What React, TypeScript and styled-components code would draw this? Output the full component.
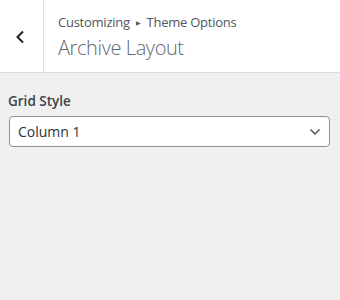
import React from "react";
import styled, { createGlobalStyle } from "styled-components";

const Global = createGlobalStyle`
  html, body { margin: 0; padding: 0; background: #f0f0f1; }
  body { font-family: "Open Sans", "Noto Sans", sans-serif; }
`;

const Page = styled.div`
  width: 340px;
  height: 300px;
  background: #f0f0f1;
`;

const Header = styled.div`
  display: flex;
  height: 72px;
  background: #fff;
  border-bottom: 1px solid #dcdcde;
`;

const Back = styled.button`
  width: 44px;
  flex: none;
  border: 0;
  border-right: 1px solid #dcdcde;
  background: #fff;
  display: flex;
  align-items: center;
  justify-content: center;
  padding: 2px 4px 0 0;
  color: #1d2327;
`;

const Titles = styled.div`
  display: flex;
  flex-direction: column;
  padding: 12px 0 0 14px;
`;

const Action = styled.span`
  font-size: 13px;
  line-height: 20px;
  color: #50575e;
  letter-spacing: -0.25px;
`;

const Arrow = styled.span`
  font-size: 6px;
  margin: 0 6px;
  vertical-align: 2px;
`;

const Title = styled.h3`
  margin: 2px 0 0;
  font-size: 20px;
  line-height: 26px;
  font-weight: 300;
  color: #646970;
  letter-spacing: -0.4px;
`;

const Body = styled.div`
  padding: 19px 10px 0 9px;
`;

const Label = styled.div`
  font-size: 13.5px;
  font-weight: 600;
  color: #3c434a;
  line-height: 18px;
  margin: 0 0 6px -1px;
`;

const Select = styled.div`
  box-sizing: border-box;
  height: 31px;
  border: 1px solid #8c8f94;
  border-radius: 4px;
  background: #fff;
  display: flex;
  align-items: center;
  justify-content: space-between;
  padding: 0 8px 0 8px;
  font-size: 14px;
  color: #2c3338;
`;

export default function App() {
  return (
    <Page>
      <Global />
      <Header>
        <Back aria-label="Back">
          <svg width="10" height="14" viewBox="0 0 10 14">
            <path d="M8 1.5 L2.5 7 L8 12.5" fill="none" stroke="#1d2327" strokeWidth="2" strokeLinecap="butt" />
          </svg>
        </Back>
        <Titles>
          <Action>
            Customizing<Arrow>▶</Arrow>Theme Options
          </Action>
          <Title>Archive Layout</Title>
        </Titles>
      </Header>
      <Body>
        <Label>Grid Style</Label>
        <Select>
          <span>Column 1</span>
          <svg width="12" height="8" viewBox="0 0 12 8">
            <path d="M1.5 1.5 L6 6 L10.5 1.5" fill="none" stroke="#50575e" strokeWidth="1.5" />
          </svg>
        </Select>
      </Body>
    </Page>
  );
}
